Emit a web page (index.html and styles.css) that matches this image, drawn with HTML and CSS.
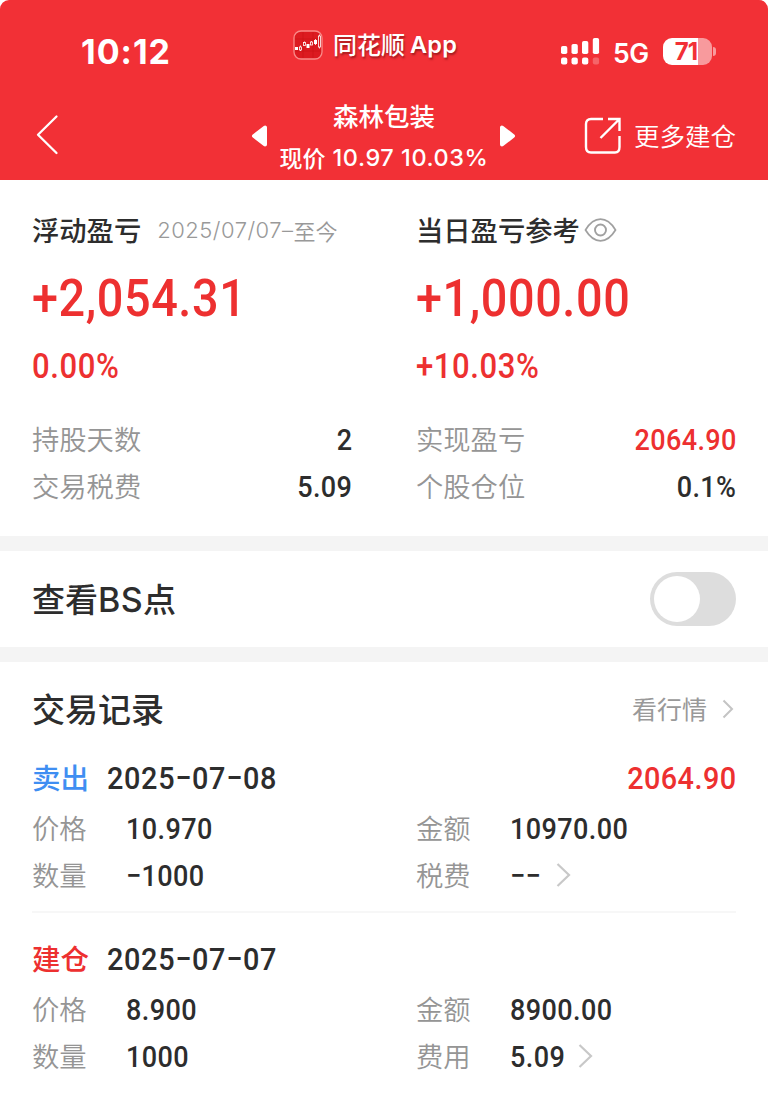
FILE: index.html
```html
<!DOCTYPE html>
<html lang="zh-CN">
<head>
<meta charset="utf-8">
<title>森林包装</title>
<link rel="stylesheet" href="styles.css">
</head>
<body>
<header class="top">
  <div class="status">
    <span class="clock">10:12</span>
    <div class="app">
      <svg class="app-icon" width="30" height="30" viewBox="0 0 30 30">
        <rect x="1" y="1" width="28" height="28" rx="7" fill="#dc1a20" stroke="#f98a88" stroke-width="1.300"/>
        <path d="M2 9H28M2 21H28M10 2V28M20 2V28" stroke="#c91016" stroke-width=".6"/>
        <g fill="#fff"><rect x="2" y="17" width="3" height="3"/><rect x="13.500" y="14" width="3" height="4"/><rect x="21" y="10" width="3" height="4"/></g>
        <g fill="none" stroke="#fff" stroke-width=".8"><rect x="6.500" y="17" width="2" height="3"/><rect x="10.500" y="12.500" width="2" height="3"/><rect x="17.500" y="12" width="2" height="3"/><rect x="25.500" y="6" width="2" height="11"/><path d="M7.500 15.500V17M7.500 20V21M11.500 11.500V12.500M18.500 11V12M22.500 9V15M26.500 4.500V6M26.500 17V18.500"/></g>
      </svg>
      <span class="app-name">同花顺</span><span class="app-latin">App</span>
    </div>
    <div class="signal">
      <svg width="39" height="28" viewBox="0 0 39 28">
        <g fill="#fff"><rect x="0" y="9" width="6.300" height="8" rx="1.800"/><rect x="10.500" y="7" width="6.300" height="10" rx="1.800"/><rect x="21" y="4" width="6.300" height="13" rx="1.800"/><rect x="31.800" y="1" width="6.300" height="16" rx="1.800"/><rect x="0" y="20.500" width="6.300" height="7" rx="2"/><rect x="10.500" y="20.500" width="6.300" height="7" rx="2"/><rect x="21" y="20.500" width="6.300" height="7" rx="2"/><rect x="31.800" y="20.500" width="6.300" height="7" rx="2" opacity=".25"/></g>
      </svg>
      <span class="net">5G</span>
      <span class="battery">71</span><span class="battery-cap"></span>
    </div>
  </div>
  <nav class="nav">
    <svg class="back" width="24" height="42" viewBox="0 0 24 42"><path d="M21.500 2.500L3 20.800L21.500 39" fill="none" stroke="#fff" stroke-width="2.300" stroke-linecap="round" stroke-linejoin="round"/></svg>
    <svg class="prev" width="18" height="24" viewBox="0 0 18 24"><path d="M3 12L14 3.500V20.500Z" fill="#fff" stroke="#fff" stroke-width="4" stroke-linejoin="round"/></svg>
    <div class="stock">
      <div class="stock-name">森林包装</div>
      <div class="stock-price"><span class="price-label">现价</span><span class="price-num">10.97 10.03%</span></div>
    </div>
    <svg class="next" width="18" height="24" viewBox="0 0 18 24"><path d="M15 12L4 3.500V20.500Z" fill="#fff" stroke="#fff" stroke-width="4" stroke-linejoin="round"/></svg>
    <svg class="open" width="38" height="38" viewBox="0 0 38 38"><path d="M19 2H7Q2 2 2 7V30Q2 35.500 7 35.500H31Q35.500 35.500 35.500 30V19M24 2H35.500V14M35 2.500L16.500 21" fill="none" stroke="#fff" stroke-width="2.400"/></svg>
    <span class="more">更多建仓</span>
  </nav>
</header>

<main>
<section class="summary">
  <div class="col">
    <div class="heading"><span class="t27 dark">浮动盈亏</span><span class="range"><span class="range-num">2025/07/07–</span>至今</span></div>
    <div class="big">+2,054.31</div>
    <div class="pct">0.00%</div>
    <div class="row first"><span class="t27 gray">持股天数</span><span class="num">2</span></div>
    <div class="row"><span class="t27 gray">交易税费</span><span class="num">5.09</span></div>
  </div>
  <div class="col">
    <div class="heading"><span class="t27 dark">当日盈亏参考</span><svg class="eye" width="33" height="24" viewBox="0 0 33 24"><path d="M1.500 12Q8 1.200 16.500 1.200T31.500 12Q25 22.800 16.500 22.800T1.500 12Z" fill="none" stroke="#a0a0a0" stroke-width="1.700"/><circle cx="16.500" cy="12" r="5.500" fill="none" stroke="#a0a0a0" stroke-width="1.900"/></svg></div>
    <div class="big">+1,000.00</div>
    <div class="pct">+10.03%</div>
    <div class="row first"><span class="t27 gray">实现盈亏</span><span class="num red">2064.90</span></div>
    <div class="row"><span class="t27 gray">个股仓位</span><span class="num">0.1%</span></div>
  </div>
</section>

<section class="bs">
  <div class="title">查看<span class="bs-latin">BS</span>点</div>
  <div class="switch"><span class="knob"></span></div>
</section>

<section class="records">
  <div class="records-head">
    <div class="title">交易记录</div>
    <div class="quote"><span>看行情</span><svg width="12" height="20" viewBox="0 0 12 20"><path d="M1.500 1.500L10 10L1.500 18.500" fill="none" stroke="#c4c4c4" stroke-width="2"/></svg></div>
  </div>
  <article class="trade">
    <div class="trade-head"><span class="side sell">卖出</span><span class="date">2025−07−08</span><span class="date red profit">2064.90</span></div>
    <div class="trade-row"><div class="cell"><span class="t27 gray">价格</span><span class="num">10.970</span></div><div class="cell"><span class="t27 gray">金额</span><span class="num">10970.00</span></div></div>
    <div class="trade-row"><div class="cell"><span class="t27 gray">数量</span><span class="num">−1000</span></div><div class="cell"><span class="t27 gray">税费</span><span class="num">−−</span><svg class="chev after-dash" width="15" height="24" viewBox="0 0 15 24"><path d="M1.500 1L13 12L1.500 23" fill="none" stroke="#c8c8c8" stroke-width="2.200"/></svg></div></div>
  </article>
  <article class="trade second">
    <div class="trade-head"><span class="side build">建仓</span><span class="date">2025−07−07</span></div>
    <div class="trade-row"><div class="cell"><span class="t27 gray">价格</span><span class="num">8.900</span></div><div class="cell"><span class="t27 gray">金额</span><span class="num">8900.00</span></div></div>
    <div class="trade-row"><div class="cell"><span class="t27 gray">数量</span><span class="num">1000</span></div><div class="cell"><span class="t27 gray">费用</span><span class="num">5.09</span><svg class="chev" width="15" height="24" viewBox="0 0 15 24"><path d="M1.500 1L13 12L1.500 23" fill="none" stroke="#c8c8c8" stroke-width="2.200"/></svg></div></div>
  </article>
</section>
</main>
</body>
</html>
```
FILE: styles.css
```css
* { box-sizing: border-box; }
body { margin: 0; width: 768px; height: 1093px; overflow: hidden; background: #fff; color: #2d2d2d; font-family: "Noto Sans CJK SC", sans-serif; white-space: nowrap; }
svg { display: block; flex: none; }
.top { height: 179.500px; background: #f23036; border-radius: 9px 9px 0 0; color: #fff; }

.status { height: 92px; display: flex; align-items: flex-start; }
.clock { width: 212px; margin: 32px 0 0 81px; font: 700 34px/40px Inter, sans-serif; letter-spacing: 1px; }
.app { width: 268px; display: flex; align-items: center; height: 32px; margin-top: 29px; text-shadow: 1px 2px 2px #7a1114aa; }
.app-name { margin-left: 10px; padding-bottom: 3px; font-size: 24px; line-height: 30px; font-weight: 500; }
.app-latin { margin-left: 5px; font: 600 23.500px/30px Inter, sans-serif; letter-spacing: .2px; }
.signal { display: flex; align-items: center; margin-top: 37px; height: 28px; }
.net { margin: 3px 0 0 13px; width: 50px; font: 600 26.500px/28px Inter, sans-serif; letter-spacing: -.3px; }
.battery { width: 49px; height: 27px; padding-right: 3px; border-radius: 9px; text-align: center; font: 700 24px/27px Inter, sans-serif; letter-spacing: -1px; color: #f23036; background: linear-gradient(90deg, #fff 35px, #f89a9d 35px); }
.battery-cap { width: 3px; height: 9px; margin-left: 1px; border-radius: 0 4px 4px 0; background: #f89a9d; }

.nav { height: 87px; display: flex; align-items: flex-start; }
.back { margin: 22px 0 0 35px; }
.prev { margin: 32px 0 0 192px; }
.stock { width: 230px; height: 87px; display: flex; flex-direction: column; align-items: center; }
.stock-name { height: 30px; margin-top: 8px; font-size: 25.500px; line-height: 30px; font-weight: 500; }
.stock-price { display: flex; align-items: center; height: 30px; margin-top: 13px; }
.price-label { padding-bottom: 2px; font-size: 23px; line-height: 28px; font-weight: 500; }
.price-num { margin-left: 7px; font: 500 23.500px/30px Inter, sans-serif; letter-spacing: .55px; }
.next { margin: 32px 0 0 -1px; }
.open { margin: 25px 0 0 68px; }
.more { margin: 28px 0 0 12px; font-size: 25.500px; line-height: 30px; font-weight: 350; }

.t27 { padding-bottom: 4px; font-size: 27.300px; line-height: 40px; }
.dark { padding-bottom: 1px; font-weight: 500; }
.gray { color: #959595; font-weight: 350; }
/* Figures are set narrower than Roboto's default proportions. */
.num, .date, .big, .pct { font-family: Roboto, sans-serif; font-weight: 500; transform: scaleX(.9); transform-origin: left center; }
.num { font-size: 30px; line-height: 40px; letter-spacing: .450px; }
.red { color: #ed3030; }

.summary { height: 356.500px; padding: 0 32px; display: flex; gap: 64px; }
.col { width: 320px; padding-top: 30px; }
.heading { display: flex; align-items: center; height: 40px; }
.range { display: flex; align-items: center; margin-left: 16px; font-size: 22px; line-height: 30px; font-weight: 350; color: #999; }
.range-num { font: 300 22px/30px Inter, sans-serif; letter-spacing: .5px; }
.eye { margin-left: 4px; }
.big { height: 60px; margin-top: 19px; font-size: 52px; line-height: 60px; letter-spacing: .650px; color: #ed3030; }
.pct { height: 40px; margin-top: 17px; font-size: 34.500px; line-height: 40px; letter-spacing: .650px; color: #ed3030; }
.row { display: flex; justify-content: space-between; align-items: center; height: 47px; }
.row .num { transform-origin: right center; margin-right: -.4px; }
.row.first { margin-top: 31px; }

.bs { height: 126px; border: solid #f4f4f4; border-width: 15.500px 0; padding: 0 32px; display: flex; align-items: center; justify-content: space-between; }
.title { padding-bottom: 2px; font-size: 33px; line-height: 44px; font-weight: 500; }
.bs-latin { font: 450 34px/40px Inter, sans-serif; letter-spacing: .3px; }
.switch { width: 86px; height: 54px; padding: 4px; border-radius: 27px; background: #ddd; }
.knob { display: block; width: 46px; height: 46px; border-radius: 50%; background: #fff; }

.records { padding: 0 32px; }
.records-head { height: 94px; display: flex; align-items: center; justify-content: space-between; }
.quote { display: flex; align-items: center; gap: 15px; padding-right: 2px; color: #999; font-size: 25px; line-height: 30px; }
.quote span { padding-bottom: 2px; }
.trade { height: 157px; border-bottom: 2px solid #f7f7f7; }
.trade.second { border: 0; padding-top: 24px; }
.trade-head { display: flex; align-items: center; height: 43px; margin-bottom: 6px; }
.side { width: 75px; padding-bottom: 2px; font-size: 28.500px; line-height: 40px; font-weight: 500; }
.sell { color: #3f8ef2; }
.build { color: #ed3030; }
.date { font-size: 32px; line-height: 40px; letter-spacing: .750px; }
.profit { margin-left: auto; margin-right: -.4px; letter-spacing: .500px; transform-origin: right center; }
.trade-row { display: flex; gap: 64px; height: 47px; }
.cell { width: 320px; display: flex; align-items: center; }
.cell .gray { width: 94px; }
.chev { margin: 0 0 2px 7px; }
.after-dash { margin-left: 11px; }
```
